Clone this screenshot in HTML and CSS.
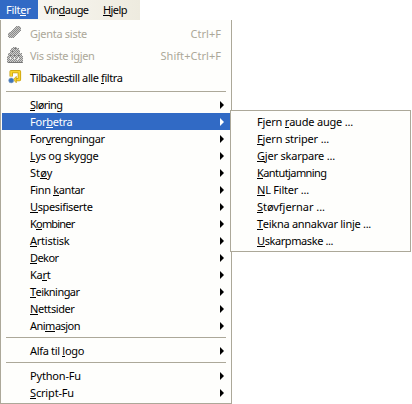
FILE: index.html
```html
<!DOCTYPE html>
<html lang="nn">
<head>
<meta charset="utf-8">
<title>Filter</title>
<link rel="stylesheet" href="styles.css">
</head>
<body>
<nav class="menubar">
  <div class="tab active"><span data-w="24.5">Filt<u>e</u>r</span></div>
  <div class="tab vindauge"><span data-w="44.5">Vin<u>d</u>auge</span></div>
  <div class="tab hjelp"><span data-w="24"><u>H</u>jelp</span></div>
</nav>
<div class="menu main">
  <div class="row tall disabled">
    <svg class="icon" viewBox="0 0 16 16" width="16" height="16" shape-rendering="crispEdges">
      <defs><pattern id="dither" width="2" height="2" patternUnits="userSpaceOnUse"><path fill="#8a8a8a" d="M0 0h1v1H0zM1 1h1v1H1z"/></pattern></defs>
      <path fill="#c6c6c4" d="M9 1h4v1h1v4h-1v1h-1v1h-1v1h-1v1H9v1H8v1H7v1H2v-1H1V8h1V7h2V6h1V5h1V4h1V3h1V2h1z"/>
      <path fill="url(#dither)" d="M9 1h4v1h1v4h-1v1h-1v1h-1v1h-1v1H9v1H8v1H7v1H2v-1H1V8h1V7h2V6h1V5h1V4h1V3h1V2h1z"/>
    </svg>
    <span data-w="57">Gjenta siste</span><span class="key" data-w="30.5">Ctrl+F</span>
  </div>
  <div class="row tall disabled">
    <svg class="icon" viewBox="0 0 16 16" width="16" height="16" shape-rendering="crispEdges">
      <path fill="#cfcfcd" d="M6 0h4v1h2v2h1v3h2v3h1v7H0V9h1V6h2V3h1V1h2z"/>
      <path fill="url(#dither)" d="M6 0h4v1h2v2h1v3h2v3h1v7H0V9h1V6h2V3h1V1h2z"/>
      <path fill="#777" d="M7 1h2v1H7zM5 4h1v1H5zM10 4h1v1h-1zM3 8h2v1H3zM7 8h2v1H7zM11 8h2v1h-2zM1 15h14v1H1z"/>
      <path fill="#f4f4f2" d="M3 10h1v2H3zM7 10h1v2H7zM11 10h1v2h-1zM5 12h1v1H5zM10 12h1v1h-1z"/>
    </svg>
    <span data-w="64.5">Vis siste igjen</span><span class="key" data-w="60.5">Shift+Ctrl+F</span>
  </div>
  <div class="row tall">
    <svg class="icon" viewBox="0 0 16 16" width="16" height="16">
      <path fill="none" stroke="#c49a08" stroke-width="3.4" stroke-linejoin="round" d="M4.2 7.6V2.6h8.2v8H9"/>
      <path fill="none" stroke="#f9d52c" stroke-width="1.9" d="M4.2 7V2.6h8.2v8H8"/>
      <path fill="#f9d52c" stroke="#c49a08" stroke-width=".7" d="M6.3 10.6L9.3 7.4v6.4z"/>
      <circle cx="4.2" cy="11.4" r="2.5" fill="#3f74b8" stroke="#86a4c9" stroke-width=".6"/>
    </svg>
    <span data-w="92.5">Tilbakestill alle <u>f</u>iltra</span>
  </div>
  <hr>
  <div class="row sub"><span data-w="32.5"><u>S</u>løring</span></div>
  <div class="row sub selected"><span data-w="42.5">For<u>b</u>etra</span></div>
  <div class="row sub"><span data-w="74.5">For<u>v</u>rengningar</span></div>
  <div class="row sub"><span data-w="68.5"><u>L</u>ys og skygge</span></div>
  <div class="row sub"><span data-w="22.5">St<u>ø</u>y</span></div>
  <div class="row sub"><span data-w="54.5">Finn <u>k</u>antar</span></div>
  <div class="row sub"><span data-w="62.5"><u>U</u>spesifiserte</span></div>
  <div class="row sub"><span data-w="44.5">K<u>o</u>mbiner</span></div>
  <div class="row sub"><span data-w="39.5"><u>A</u>rtistisk</span></div>
  <div class="row sub"><span data-w="28.5"><u>D</u>ekor</span></div>
  <div class="row sub"><span data-w="20.5">Ka<u>r</u>t</span></div>
  <div class="row sub"><span data-w="49.5"><u>T</u>eikningar</span></div>
  <div class="row sub"><span data-w="44.5"><u>N</u>ettsider</span></div>
  <div class="row sub"><span data-w="50">Ani<u>m</u>asjon</span></div>
  <hr>
  <div class="row sub"><span data-w="54">Alfa til <u>l</u>ogo</span></div>
  <hr>
  <div class="row sub"><span data-w="51">Python-Fu</span></div>
  <div class="row sub"><span data-w="44"><u>S</u>cript-Fu</span></div>
</div>
<div class="menu flyout">
  <div class="row"><span data-w="96">Fjern <u>r</u>aude auge ...</span></div>
  <div class="row"><span data-w="72"><u>F</u>jern striper ...</span></div>
  <div class="row"><span data-w="78"><u>G</u>jer skarpare ...</span></div>
  <div class="row"><span data-w="69.5"><u>K</u>antutjamning</span></div>
  <div class="row"><span data-w="52"><u>N</u>L Filter ...</span></div>
  <div class="row"><span data-w="68"><u>S</u>tøvfjernar ...</span></div>
  <div class="row"><span data-w="114"><u>T</u>eikna annakvar linje ...</span></div>
  <div class="row"><span data-w="76"><u>U</u>skarpmaske ...</span></div>
</div>
<script src="menu.js"></script>
</body>
</html>
```
FILE: styles.css
```css
* { box-sizing: border-box; }
body {
  margin: 0;
  width: 412px;
  height: 404px;
  overflow: hidden;
  background: #fff;
  color: #000;
  font: 11px/17px "Noto Sans", sans-serif;
  position: relative;
}
u { text-decoration: none; box-shadow: inset 0 -1px 0 currentColor; display: inline-block; height: 15px; line-height: 17px; vertical-align: top; }
span { white-space: pre; display: block; height: 17px; }
.menubar {
  display: flex;
  width: 140px;
  height: 20px;
  background: linear-gradient(90deg, #fbfaf7, #eeebdf);
}
.tab { padding: 1px 0 0 6px; }
.active { width: 38px; height: 19px; background: #316ac5; color: #fff; }
.vindauge { width: 58px; }
.hjelp { padding-left: 7px; }
.menu { background: #fefefc; border: 1px solid #aca899; }
.main { width: 232px; height: 384px; border-top: 0; padding: 2px 1px 1px; }
.row { display: flex; height: 17px; padding-left: 28px; position: relative; }
.tall { height: 22px; padding: 3px 9px 0 5px; }
.icon { flex: none; width: 16px; margin: 0 7px 0 0; }
.disabled { color: #aca899; }
.key { margin-left: auto; }
.selected { background: #316ac5; color: #fff; }
.sub { justify-content: space-between; padding-right: 6px; }
.sub::after {
  content: "";
  align-self: center;
  border-left: 4px solid currentColor;
  border-top: 4px solid transparent;
  border-bottom: 4px solid transparent;
}
hr { height: 1px; margin: 3px 4px 4px; border: 0; background: #aca899; }
.flyout {
  position: absolute;
  left: 230px;
  top: 110px;
  width: 181px;
  height: 142px;
  padding: 2px 0;
}
.flyout .row { padding-left: 26px; }
```
FILE: menu.js
```js
document.querySelectorAll('[data-w]').forEach(function (el) {
  var range = document.createRange();
  range.selectNodeContents(el);
  var width = range.getBoundingClientRect().width;
  el.style.letterSpacing = (Number(el.dataset.w) - width) / el.textContent.length + 'px';
});
```
